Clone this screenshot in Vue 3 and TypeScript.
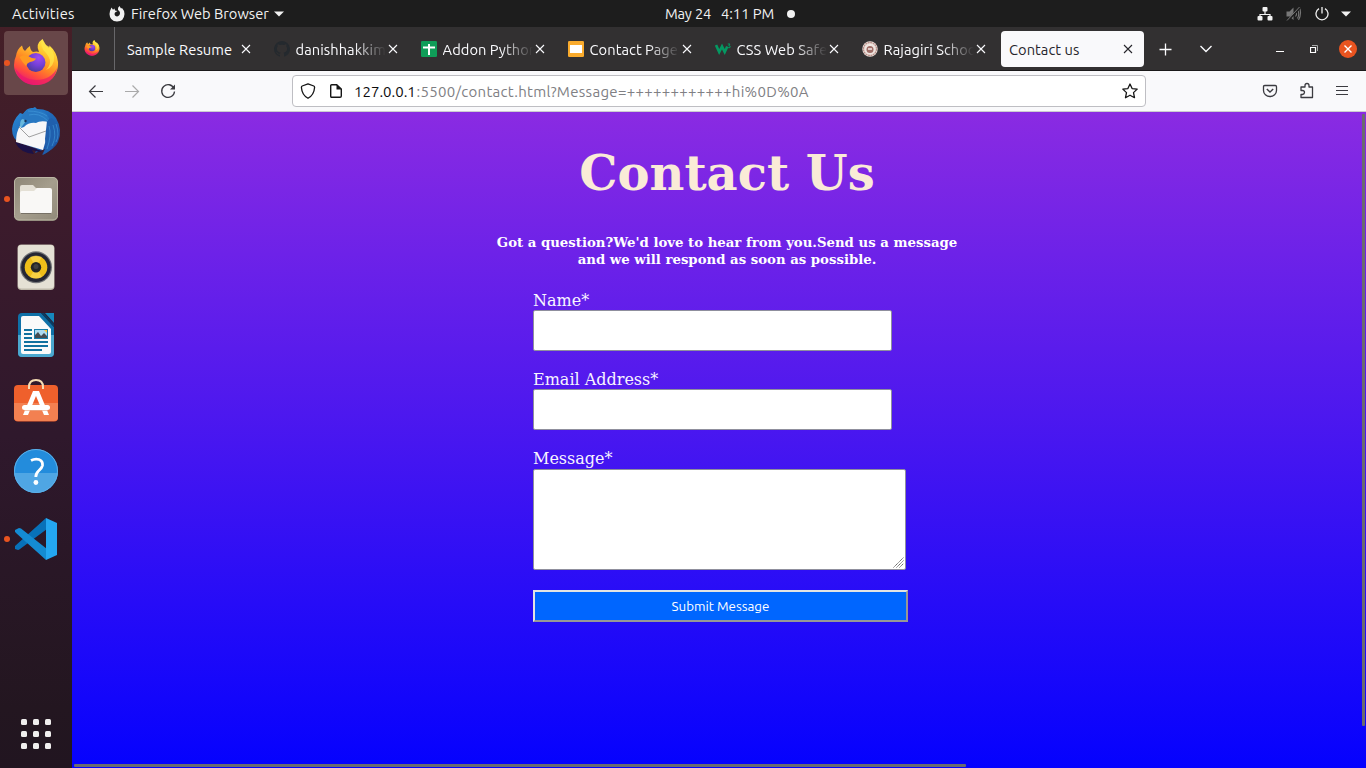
<script setup lang="ts">
interface Tab { title: string; icon?: string; active?: boolean }
const tabs: Tab[] = [
  { title: 'Sample Resume' },
  { title: 'danishhakkim/', icon: 'github' },
  { title: 'Addon Python', icon: 'sheets' },
  { title: 'Contact Page', icon: 'slides' },
  { title: 'CSS Web Safe', icon: 'w3' },
  { title: 'Rajagiri School', icon: 'seal' },
  { title: 'Contact us', active: true },
]
interface DockApp { name: string; running?: boolean; active?: boolean }
const apps: DockApp[] = [
  { name: 'firefox', running: true, active: true },
  { name: 'mail' },
  { name: 'files', running: true },
  { name: 'music' },
  { name: 'writer' },
  { name: 'store' },
  { name: 'help' },
  { name: 'code', running: true },
]
</script>

<template>
  <div class="desktop">
    <svg width="0" height="0" class="defs">
      <defs>
        <linearGradient id="fx" x1=".8" y1="0" x2=".3" y2="1">
          <stop offset="0" stop-color="#fff44f" /><stop offset=".3" stop-color="#ffc52e" /><stop offset=".55" stop-color="#ff8a24" /><stop offset=".78" stop-color="#ff4a3f" /><stop offset="1" stop-color="#e5127e" />
        </linearGradient>
        <radialGradient id="fxball" cx=".65" cy=".25" r=".8">
          <stop offset="0" stop-color="#a04bf0" /><stop offset=".5" stop-color="#7540d8" /><stop offset="1" stop-color="#4a3a9c" />
        </radialGradient>
        <linearGradient id="tb" x1="0" y1="0" x2=".8" y2="1">
          <stop offset="0" stop-color="#2b8fdc" /><stop offset=".5" stop-color="#2069b8" /><stop offset="1" stop-color="#1c4f9f" />
        </linearGradient>
        <linearGradient id="filesbg" x1="0" y1="0" x2="1" y2="1">
          <stop offset="0" stop-color="#8d8676" /><stop offset=".5" stop-color="#a59e8d" /><stop offset="1" stop-color="#918a7a" />
        </linearGradient>
        <g id="foxlogo">
          <path d="M12 25Q13 18 18 14.500Q18.500 18 21 20Q23 17 26 15Q26 19 29 21Q33 20 35 21Q31 13 38.500 8Q40 13 45 17Q46 14.500 45 14Q53 21 54 31C55 44 45 54 32 54C19 54 10 44 10 34Q10 29 12 25Z" fill="url(#fx)" />
          <path d="M11 37Q19 49 32 49Q47 49 53 37Q50 54 32 54Q15 54 11 37Z" fill="#e9156f" opacity=".65" />
          <circle cx="31.800" cy="31.500" r="9.600" fill="url(#fxball)" />
          <path d="M15.500 26Q20 23 24 25Q29 28 32 27.500Q31 30 26 31Q23 32 22 35Q18 31 15.500 26Z" fill="#ff9a21" />
          <path d="M38.500 8Q35 15 42 22Q50 31 42 39Q51 35 50 25Q49 17 42 14Z" fill="#ffe74a" opacity=".75" />
        </g>
      </defs>
    </svg>

    <header class="panel">
      <span class="activities">Activities</span>
      <svg class="fxmono" width="16" height="16" viewBox="0 0 16 16"><path d="M1 5L2.500 1.500L4 3.800L5.500 2.500L6 4.500L8.500 5L6 6.500Q5 8 6 9.500Q8.500 11.500 10.500 9Q12 6 9 4Q8.500 1.500 10.500 0L12 2.500L13 2Q15.500 4.500 15.500 8Q15 15.500 8 15.500Q.7 15.200.5 8Z" fill="#f2f2f2" /></svg>
      <span class="appname">Firefox Web Browser</span>
      <svg class="menuarrow" width="10" height="6" viewBox="0 0 10 6"><path d="M0 .5H10L5 5.500Z" fill="#f2f2f2" /></svg>
      <span class="clock"><span class="date">May 24</span><span class="time">4:11 PM</span><i class="notice" /></span>
      <span class="tray">
        <svg width="16" height="14" viewBox="0 0 16 14"><path d="M8 4V8M3 10V7.500H13V10" fill="none" stroke="#f2f2f2" stroke-width="1.200" /><rect x="5.500" y="0" width="5" height="4.500" rx="1" fill="#f2f2f2" /><rect x="0.500" y="9" width="5" height="4.500" rx="1" fill="#f2f2f2" /><rect x="10.500" y="9" width="5" height="4.500" rx="1" fill="#f2f2f2" /></svg>
        <svg width="16" height="16" viewBox="0 0 16 16"><path d="M.5 5.500H3.500L7.500 1.500V14L3.500 10.500H.5Z" fill="#777" /><path d="M9.500 5.500Q11.500 8 9.500 10.500M11.500 3.500Q14 8 11.500 12.500M13.500 1.500Q16 8 12.500 14" fill="none" stroke="#777" stroke-width="1.100" /><path d="M1.500 15L14 1.500" stroke="#1d1d1d" stroke-width="2.200" /><path d="M1 14.500L13.500 1" stroke="#777" /></svg>
        <svg width="14" height="14" viewBox="0 0 14 14"><path d="M4 1.600A6 6 0 1 0 10 1.600M7 0V6.500" fill="none" stroke="#f2f2f2" stroke-width="1.300" /></svg>
        <svg width="10" height="6" viewBox="0 0 10 6"><path d="M0 .5H10L5 5.500Z" fill="#f2f2f2" /></svg>
      </span>
    </header>

    <div class="workspace">
      <nav class="dock">
        <div v-for="app in apps" :key="app.name" class="tile" :class="{ current: app.active }">
          <i v-if="app.running" class="dot" />
          <svg width="64" height="64" viewBox="0 0 64 64">
            <use v-if="app.name === 'firefox'" href="#foxlogo" />
            <g v-else-if="app.name === 'mail'">
              <path d="M19 15Q23 8 29 9L31 8L33 10Q46 10 52 19Q59 31 54 43Q51 50 38 56L41 50L31 54L33 50L16 44Q8 40 8 30Q9 21 16 14Z" fill="url(#tb)" />
              <path d="M11 43L38 52L35 53L28 51L30 55Q16 54 11 43Z" fill="#1b1147" />
              <path d="M16 27L22 23L43 22Q44 36 39 51L12 43Q12 33 16 27Z" fill="#f7f7f8" />
              <path d="M15 28L25 38L42 32" fill="none" stroke="#a0a0a0" stroke-width="1" />
              <path d="M19 15Q25 8 32 11Q45 12 46 24Q38 20 32 24Q25 23 20 28L17 29Q15 21 19 15Z" fill="#2878c2" />
              <path d="M43 22Q47 18 49 20Q56 29 53 41Q49 51 39 56Q43 47 41 40Z" fill="#205fad" />
              <path d="M24 12Q36 12 43 17M25 16Q35 13 44 22M45 27Q48 36 43 50M49 26Q53 37 48 47M52 25Q56 36 52 43" fill="none" stroke="#429bdc" stroke-width="1" opacity=".6" />
              <path d="M16 27Q16 20 19 20L22 22L19 26L17 29Z" fill="#68b8dc" /><circle cx="21.500" cy="22" r="1.200" fill="#16345b" />
            </g>
            <g v-else-if="app.name === 'files'">
              <rect x="10" y="10" width="44" height="44" rx="5" fill="#706a5d" /><rect x="10.500" y="10.500" width="43" height="42.500" rx="4.500" fill="url(#filesbg)" stroke="#bdb6a5" />
              <path d="M16 22V20Q16 18 18 18H29L32 21H46V30H16Z" fill="#e4e0d5" /><path d="M18 24H30L33 21H46Q48 21 48 23V44Q48 46.500 46 46.500H18Q16 46.500 16 44V26Q16 24 18 24Z" fill="#f9f8f6" /><path d="M17 46.500H47" stroke="#777166" />
            </g>
            <g v-else-if="app.name === 'music'">
              <rect x="13.500" y="9.500" width="37" height="45.500" rx="4" fill="#beb9aa" /><rect x="14" y="10" width="36" height="43.500" rx="3.500" fill="#e5e1d5" />
              <circle cx="32" cy="32.300" r="16" fill="#737477" /><circle cx="32" cy="32.300" r="14.800" fill="#252633" /><circle cx="32" cy="32.300" r="11.300" fill="#efbe19" /><path d="M26 42L32 32L38 42Q32 45 26 42M26 22L32 32L38 22Q32 19 26 22" fill="#ffe16b" opacity=".5" /><circle cx="32" cy="32.300" r="5.200" fill="#262626" /><circle cx="32" cy="31.500" r="2.500" fill="#414141" />
            </g>
            <g v-else-if="app.name === 'writer'">
              <path d="M18 10H37L50 24V50Q50 54 46 54H18Q14 54 14 50V14Q14 10 18 10Z" fill="#0f71a8" /><path d="M14 32H50V50Q50 54 46 54H18Q14 54 14 50Z" fill="#4ba8cf" /><path d="M19 13H35L47 26V49Q47 51 45 51H19Q17 51 17 49V15Q17 13 19 13Z" fill="#fafafa" /><path d="M41 10H50V20Z" fill="#1688bd" /><path d="M37 10L50 24V21L40 10Z" fill="#073e65" />
              <path d="M20 27H28M20 31H28M20 35H28M20 39H44M20 43H44M20 47H38" stroke="#11719f" stroke-width="2" /><rect x="30" y="26" width="14" height="10" fill="#167ca9" /><rect x="31" y="27" width="12" height="8" fill="#acdaf0" /><path d="M31 35V32L34 29L37 33L40 30L43 33V35Z" fill="#454b50" /><path d="M40 27H43V30Z" fill="#ffc435" />
            </g>
            <g v-else-if="app.name === 'store'">
              <rect x="10" y="14" width="44" height="36.500" rx="4" fill="#ef602c" /><path d="M10 32H54V46Q54 50 50 50H14Q10 50 10 46Z" fill="#f38051" />
              <path d="M25 18V16Q25 9 32 9Q39 9 39 16V18" fill="none" stroke="#f7ddb4" stroke-width="2" /><path d="M19 44L29 20H35L45 44H40L32 25L24 44Z" fill="#fff" /><rect x="18" y="34" width="28" height="5" rx="2.500" fill="#fff" /><path d="M20 39.500H44" stroke="#e9a98c" stroke-width=".7" />
            </g>
            <g v-else-if="app.name === 'help'">
              <circle cx="32" cy="32" r="22" fill="#238cdc" /><path d="M10.100 34A22 22 0 0 0 53.900 34Z" fill="#4fa6e4" /><circle cx="32" cy="32" r="21.500" fill="none" stroke="#5dafe7" />
              <path d="M27 21.500Q31 19.300 35 20.500Q39 22 38.500 26.500Q38 29 34.500 32Q31.800 34.500 31.800 38" fill="none" stroke="#fff" stroke-width="2.800" /><circle cx="31.900" cy="43.500" r="2.400" fill="#fff" />
            </g>
            <g v-else>
              <path d="M42 11L11 39V42L14 43Q15 43 16 42L43 22Z" fill="#0871b9" /><path d="M15 21L11 23Q10.500 25 12 26L42 53L43 42L17 21.500Z" fill="#148bd2" /><path d="M42 11L53 16V48L42 53Z" fill="#24a7f1" />
            </g>
          </svg>
        </div>
        <div class="grid"><i v-for="n in 9" :key="n" /></div>
      </nav>

      <main class="browser">
        <div class="tabbar">
          <div class="pinned"><svg width="16" height="16" viewBox="9 8 46 47"><use href="#foxlogo" /></svg></div>
          <div class="tabs">
            <div v-for="tab in tabs" :key="tab.title" class="tab" :class="{ selected: tab.active }">
              <svg v-if="tab.icon" class="favicon" width="16" height="16" viewBox="0 0 16 16">
                <path v-if="tab.icon === 'github'" d="M8 0A8 8 0 0 0 5.500 15.600C5.900 15.700 6 15.400 6 15.200V13.700C3.800 14.200 3.300 12.800 3.300 12.800C2.900 11.900 2.400 11.600 2.400 11.600C1.700 11.100 2.500 11.100 2.500 11.100C3.300 11.200 3.700 11.900 3.700 11.900C4.400 13.200 5.600 12.800 6.100 12.600C6.100 12.100 6.400 11.700 6.600 11.500C4.800 11.300 2.900 10.600 2.900 7.500C2.900 6.600 3.200 5.900 3.700 5.400C3.600 5.200 3.300 4.300 3.800 3.300C3.800 3.300 4.500 3.100 6 4.100A8 8 0 0 1 10 4.100C11.500 3.100 12.200 3.300 12.200 3.300C12.700 4.300 12.400 5.200 12.300 5.400C12.800 5.900 13.100 6.600 13.100 7.500C13.100 10.600 11.200 11.300 9.400 11.500C9.700 11.700 10 12.200 10 13V15.200C10 15.400 10.100 15.700 10.500 15.600A8 8 0 0 0 8 0Z" fill="#24292e" />
                <g v-else-if="tab.icon === 'sheets'"><rect width="16" height="16" rx="1.300" fill="#0f9d58" /><path d="M2 6.500H14M8 3V14" stroke="#fff" stroke-width="2" /></g>
                <g v-else-if="tab.icon === 'slides'"><rect width="16" height="16" rx="1.300" fill="#f9ab2d" /><rect x="2" y="4" width="12" height="8" fill="#fff" /></g>
                <g v-else-if="tab.icon === 'w3'" fill="none" stroke="#059862"><path d="M1 4L4.200 11L7 5.500L9.700 11L12.300 5.500" stroke-width="2.700" /><path d="M12.800 3H15L13.800 4.600Q16 4.800 15 6.500Q14 7.200 12.700 6.300" stroke-width="1" /></g>
                <g v-else><circle cx="8" cy="8" r="7.700" fill="#eee4df" /><circle cx="8" cy="8" r="6.500" fill="none" stroke="#b98f89" stroke-width="1.300" stroke-dasharray="2 .5" /><circle cx="8" cy="8.500" r="3.500" fill="#9e6b65" /><path d="M6 8H10M7 4H9" stroke="#f5e9e5" stroke-width="1.400" /></g>
              </svg>
              <span class="title" :class="{ fade: tab.icon }">{{ tab.title }}</span>
              <svg class="close" width="16" height="16" viewBox="0 0 16 16"><path d="M4 4L12 12M12 4L4 12" fill="none" stroke="currentColor" stroke-width="1.100" /></svg>
            </div>
          </div>
          <svg class="newtab" width="14" height="14" viewBox="0 0 14 14"><path d="M7.500 1.500V13.500M1.500 7.500H13.500" stroke="#fbfbfe" stroke-width="1.300" /></svg>
          <svg class="alltabs" width="14" height="10" viewBox="0 0 14 10"><path d="M1.500 2L7 7.500L12.500 2" fill="none" stroke="#fbfbfe" stroke-width="1.400" /></svg>
          <div class="winctl">
            <svg width="8" height="8" viewBox="0 0 8 8"><path d="M0 6.500H8" stroke="#fff" /></svg>
            <svg width="8" height="8" viewBox="0 0 8 8"><path d="M.5 2.500H5.500V7.500H.5Z" fill="none" stroke="#fff" stroke-width="1.200" /><path d="M2 .5H7.500V6" fill="none" stroke="#aaa" /></svg>
            <svg width="18" height="18" viewBox="0 0 18 18"><circle cx="9" cy="9" r="9" fill="#e95420" /><path d="M5.500 5.500L12.500 12.500M12.500 5.500L5.500 12.500" stroke="#fff" stroke-width="1.400" /></svg>
          </div>
        </div>
        <div class="toolbar">
          <div class="history">
            <svg width="16" height="16" viewBox="0 0 16 16"><path d="M15 8.500H1.500M7.500 2.500L1.500 8.500L7.500 14.500" fill="none" stroke="#3b3b40" stroke-width="1.200" /></svg>
            <svg width="16" height="16" viewBox="0 0 16 16"><path d="M1 8.500H14.500M8.500 2.500L14.500 8.500L8.500 14.500" fill="none" stroke="#aaa" stroke-width="1.200" /></svg>
            <svg width="16" height="16" viewBox="0 0 16 16"><path d="M14 5.500A6.400 6.400 0 1 0 14.500 8.500" fill="none" stroke="#3b3b40" stroke-width="1.300" /><path d="M15 1.500V6.500H10Z" fill="#3b3b40" /></svg>
          </div>
          <div class="urlbar">
            <svg class="shield" width="16" height="16" viewBox="0 0 16 16"><path d="M8 .8L13.800 3Q14.800 3.500 14.500 5Q14 12 8 15.300Q2 12 1.500 5Q1.200 3.500 2.200 3Z" fill="none" stroke="#151515" stroke-width="1.300" stroke-linejoin="round" /></svg>
            <svg class="page" width="16" height="16" viewBox="0 0 16 16"><path d="M3.700 1.700H8.700L13.300 6V13Q13.300 14.300 12 14.300H3.700Q2.700 14.300 2.700 13V2.700Q2.700 1.700 3.700 1.700Z" fill="none" stroke="#151515" stroke-width="1.400" /><path d="M8.500 1.500V6.500H13.500Z" fill="#151515" /></svg>
            <span class="host">127.0.0.1</span><span class="path">:5500/contact.html?Message=++++++++++++hi%0D%0A</span>
            <svg class="star" width="16" height="16" viewBox="0 0 16 16"><path d="M8 1L10.100 5.600L15.200 6.100L11.500 9.600L12.500 14.700L8 12.200L3.500 14.700L4.500 9.600L.8 6.100L5.900 5.600Z" fill="none" stroke="#151515" stroke-width="1.300" stroke-linejoin="round" /></svg>
          </div>
          <div class="actions">
            <svg width="16" height="16" viewBox="0 0 16 16"><path d="M2.700 2.500H13.300Q14.500 2.500 14.500 3.700V7.500A6.500 6 0 0 1 1.500 7.500V3.700Q1.500 2.500 2.700 2.500Z" fill="none" stroke="#3b3b40" stroke-width="1.300" /><path d="M4.800 6L8 9L11.200 6" fill="none" stroke="#3b3b40" stroke-width="1.400" /></svg>
            <svg width="16" height="18" viewBox="0 0 16 18"><path d="M2 7.500V5H6V3.500Q6 1.500 8 1.500Q10 1.500 10 3.500V5H13.500V15.500H2V12.500H3.500Q5.500 12 5.500 10.200Q5.500 8.500 3.500 8.500H2Z" fill="none" stroke="#3b3b40" stroke-width="1.300" stroke-linejoin="round" /></svg>
            <svg width="14" height="12" viewBox="0 0 14 12"><path d="M0 1.500H12M0 5.500H12M0 9.500H12" stroke="#3b3b40" stroke-width="1.100" /></svg>
          </div>
        </div>

        <section class="content">
          <h1>Contact Us</h1>
          <h5>Got a question?We'd love to hear from you.Send us a message and we will respond as soon as possible.</h5>
          <form @submit.prevent>
            <label>Name*</label>
            <input type="text" />
            <label>Email Address*</label>
            <input type="text" />
            <label>Message*</label>
            <div class="message">
              <textarea />
              <svg class="grip" width="11" height="11" viewBox="0 0 11 11"><path d="M.5 10.500L10.500.5M3.500 10.500L10.500 3.500M6.500 10.500L10.500 6.500" stroke="#666" stroke-width="1" stroke-dasharray="1.400 .4" /></svg>
            </div>
            <button type="submit"><span>Submit Message</span></button>
          </form>
          <i class="vscroll" /><i class="hscroll" />
        </section>
      </main>
    </div>
  </div>
</template>

<style>
body { margin: 0; overflow: hidden; }
</style>
<style scoped>
* { box-sizing: border-box; }
.desktop { width: 1366px; height: 768px; display: flex; flex-direction: column; overflow: hidden; font-family: Ubuntu, "Noto Sans", sans-serif; font-size: 14.667px; }
.defs { position: absolute; }
svg { display: block; flex: none; }
.panel { height: 27px; flex: none; display: flex; align-items: center; background: #1d1d1d; color: #f2f2f2; padding: 0 15px 0 12px; position: relative; white-space: nowrap; }
.activities { width: 97px; letter-spacing: .25px; }
.fxmono { margin-right: 6px; }
.appname { width: 143px; }
.clock { position: absolute; left: 665px; top: 0; height: 27px; display: flex; align-items: center; }
.date { width: 56px; letter-spacing: -.2px; }
.time { width: 66px; }
.notice { width: 8px; height: 8px; border-radius: 50%; background: #f2f2f2; }
.tray { margin-left: auto; display: flex; align-items: center; gap: 12.500px; }
.tray svg:nth-child(2) { margin-left: 1px; }
.workspace { display: flex; height: 741px; }
.dock { width: 72px; flex: none; background: linear-gradient(#451f27, #3c1b2c 25%, #2f182c 55%, #231620 92%, #211520); padding: 4px 4px 19px; display: flex; flex-direction: column; gap: 4px; }
.tile { width: 64px; height: 64px; flex: none; position: relative; border-radius: 4px; }
.tile.current { background: #684749; }
.dot { position: absolute; left: 0; top: 29px; width: 6px; height: 6px; border-radius: 50%; background: #e95420; }
.grid { margin: auto auto 0; display: grid; grid-template-columns: repeat(3, 6px); gap: 6px; }
.grid i { height: 6px; border-radius: 1.500px; background: #f0eeee; }
.browser { width: 1294px; display: flex; flex-direction: column; }
.tabbar { height: 44px; flex: none; background: #323031; border-bottom: 1px solid #1a191a; display: flex; align-items: center; color: #fbfbfe; }
.pinned { width: 43px; height: 43px; padding: 13px 0 0 12px; border-right: 1px solid #68676a; }
.tabs { display: flex; gap: 4px; margin-left: 4px; height: 43px; padding-top: 4px; }
.tab { width: 143px; height: 36px; padding: 0 8px; display: flex; align-items: center; border-radius: 4px; }
.tab.selected { background: #f9f9fb; color: #26252b; }
.favicon { margin-right: 5.600px; }
.title { flex: 1; min-width: 0; overflow: hidden; white-space: nowrap; padding-top: 1px; letter-spacing: .05px; }
.title.fade { margin-right: -1px; mask-image: linear-gradient(90deg, #000 65%, transparent 100%); }
.newtab { margin-left: 14px; }
.alltabs { margin-left: 27px; }
.winctl { display: flex; align-items: center; gap: 25px; margin-left: auto; padding-right: 9px; }
.winctl svg:nth-child(1) { margin-right: 1px; }
.winctl svg:nth-child(3) { margin-left: -4px; }
.toolbar { height: 41px; flex: none; background: #f9f9fb; border-bottom: 1px solid #ccccd0; display: flex; align-items: center; }
.history { display: flex; gap: 20px; padding-left: 16px; width: 220px; }
.urlbar { width: 854px; height: 32px; border: 1px solid #bebec3; border-radius: 4px; background: #fff; display: flex; align-items: center; padding: 0 7px; color: #808084; white-space: nowrap; font-size: 15px; }
.page { margin: 0 10px 0 12px; }
.host { color: #0c0c0d; width: 62.500px; padding-top: 1px; }
.path { letter-spacing: .3px; padding-top: 1px; }
.star { margin-left: auto; }
.actions { display: flex; align-items: center; gap: 21px; margin-left: 116px; }
.content { flex: 1; position: relative; background: linear-gradient(#8a2be2, #0000ff 680px); color: #fff; font-family: "DejaVu Serif", serif; padding-top: 33px; }
h1 { margin: 0 0 32px; width: 1310px; text-align: center; color: #faebd7; font-size: 48px; line-height: 57px; font-weight: bold; }
h5 { margin: 0 auto 0 415px; width: 480px; text-align: center; font-size: 13.280px; line-height: 17px; font-weight: bold; }
form { margin: 23px 0 0 461px; width: 375px; display: flex; flex-direction: column; align-items: flex-start; font-size: 16px; }
label { line-height: 19px; color: #f8f4ff; }
input { width: 359px; height: 41px; margin: 0 0 19px; border: 1px solid #8f8f9d; border-radius: 2px; background: #fff; }
.message { position: relative; width: 373px; height: 101px; margin: 1px 0 20px; }
textarea { display: block; width: 373px; height: 101px; resize: none; border: 1px solid #8f8f9d; border-radius: 2px; background: #fff; }
.grip { position: absolute; right: 2px; bottom: 2px; }
button { width: 375px; height: 32px; border: 2px solid; border-color: #e3e3e3 #979797 #979797 #e3e3e3; background: #0066ff; color: #fff; font: 13.333px Ubuntu, "Noto Sans", sans-serif; padding: 0; }
.vscroll { position: absolute; right: 1px; top: 2px; width: 3px; height: 612px; border-radius: 1px; background: #6b6b6f; }
.hscroll { position: absolute; left: 2px; bottom: 1px; width: 892px; height: 3px; border-radius: 1px; background: #6b6b6f; }
</style>
